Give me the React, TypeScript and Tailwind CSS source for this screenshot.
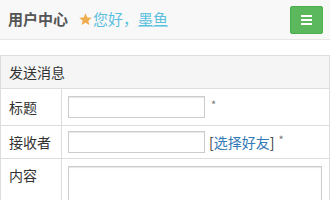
import React from "react";

const font = { fontFamily: '"Noto Sans CJK SC", "Noto Sans", sans-serif' };

function Star() {
  return (
    <svg width="15" height="15" viewBox="0 0 24 24" className="inline-block">
      <path
        d="M12 2l2.9 6.6 7.1.6-5.4 4.7 1.6 7-6.2-3.7-6.2 3.7 1.6-7L2 9.2l7.1-.6z"
        fill="#f0ad4e"
      />
    </svg>
  );
}

export default function App() {
  return (
    <div className="w-[330px] h-[200px] overflow-hidden bg-white text-[#333]" style={font}>
      {/* Navbar */}
      <div className="h-[40px] bg-[#f8f8f8] border-b border-[#e7e7e7] flex items-center pl-[8px] pr-[7px]">
        <span className="text-[15px] font-bold text-[#555]">用户中心</span>
        <span className="ml-[10px] flex items-center text-[15px] text-[#5bc0de]">
          <Star />
          <span>您好，</span>
          <span className="underline decoration-[#9bd8ea]">墨鱼</span>
        </span>
        <button className="ml-auto w-[33px] h-[28px] bg-[#5cb85c] border border-[#4cae4c] rounded-[2px] flex flex-col items-center justify-center gap-[2px]">
          <span className="block w-[11px] h-[2px] bg-white" />
          <span className="block w-[11px] h-[2px] bg-white" />
          <span className="block w-[11px] h-[2px] bg-white" />
        </button>
      </div>

      {/* Form table */}
      <table className="mt-[15px] w-full border-collapse text-[14px]">
        <tbody>
          <tr className="bg-[#f5f5f5]">
            <td colSpan={2} className="border border-[#ddd] h-[33px] px-[8px]">
              发送消息
            </td>
          </tr>
          <tr>
            <td className="border border-[#ddd] w-[61px] px-[8px] h-[37px]">标题</td>
            <td className="border border-[#ddd] px-[6px]">
              <div className="flex items-center">
                <input className="w-[137px] h-[22px] border border-[#ccc] shadow-[inset_0_1px_1px_rgba(0,0,0,0.1)] outline-none" />
                <span className="ml-[6px] text-[11px] text-[#777] -mt-[6px]">*</span>
              </div>
            </td>
          </tr>
          <tr>
            <td className="border border-[#ddd] px-[8px] h-[33px]">接收者</td>
            <td className="border border-[#ddd] px-[6px]">
              <div className="flex items-center">
                <input className="w-[137px] h-[22px] border border-[#ccc] shadow-[inset_0_1px_1px_rgba(0,0,0,0.1)] outline-none" />
                <span className="ml-[4px]">
                  [<span className="text-[#337ab7]">选择好友</span>]
                </span>
                <span className="ml-[4px] text-[11px] text-[#777] -mt-[6px]">*</span>
              </div>
            </td>
          </tr>
          <tr>
            <td className="border border-[#ddd] px-[8px] pt-[6px] align-top h-[60px]">内容</td>
            <td className="border border-[#ddd] px-[6px] pt-[7px] align-top">
              <div className="w-[254px] h-[60px] border border-[#ccc] shadow-[inset_0_1px_1px_rgba(0,0,0,0.1)]" />
            </td>
          </tr>
        </tbody>
      </table>
    </div>
  );
}
